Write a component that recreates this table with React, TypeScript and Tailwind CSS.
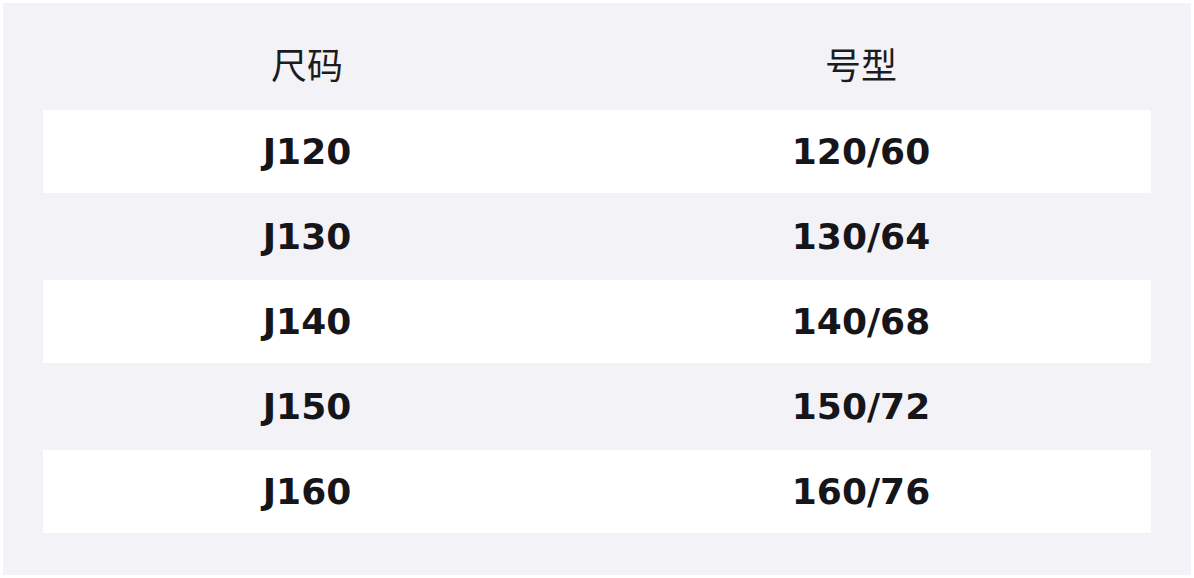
// size chart: 尺码 -> 号型
const rows = [
  { size: "J120", fit: "120/60" },
  { size: "J130", fit: "130/64" },
  { size: "J140", fit: "140/68" },
  { size: "J150", fit: "150/72" },
  { size: "J160", fit: "160/76" },
];

export default function App() {
  return (
    <div className="w-[1194px] h-[578px] bg-white p-[3px] font-['DejaVu_Sans','Noto_Sans_CJK_SC',sans-serif]">
      <div className="h-full bg-[#f2f2f7] px-[40px] pt-[22px] pb-[42px] flex flex-col gap-[2px]">
        {/* header row */}
        <div className="grid grid-cols-2 h-[83px] items-center text-[36px] text-[#1c1c1e]">
          <div className="text-center pr-[26px]">尺码</div>
          <div className="text-center pr-[26px]">号型</div>
        </div>
        {rows.map((r, i) => (
          <div
            key={r.size}
            className={
              "grid grid-cols-2 h-[83px] items-center text-[36px] font-bold text-[#16161a] " +
              (i % 2 === 0 ? "bg-white" : "bg-[#f2f2f7]")
            }
          >
            <div className="text-center pr-[26px]">{r.size}</div>
            <div className="text-center pr-[26px]">{r.fit}</div>
          </div>
        ))}
      </div>
    </div>
  );
}
